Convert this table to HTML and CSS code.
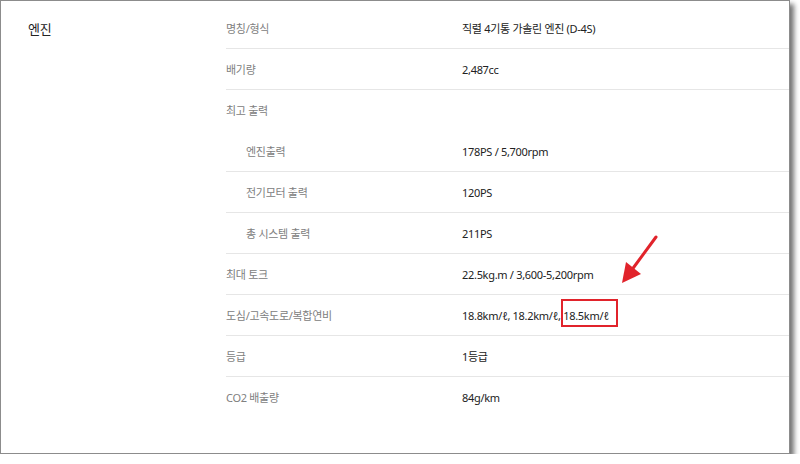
FILE: index.html
```html
<!DOCTYPE html>
<html lang="ko">
<head>
<meta charset="utf-8">
<link rel="stylesheet" href="styles.css">
</head>
<body>
<div class="frame">
  <div class="spec">
    <div class="cat">엔진</div>
    <div class="rows">
      <div class="row"><div class="label">명칭/형식</div><div class="value">직렬 4기통 가솔린 엔진 (D-4S)</div></div>
      <div class="row"><div class="label">배기량</div><div class="value">2,487cc</div></div>
      <div class="row no-line"><div class="label">최고 출력</div><div class="value"></div></div>
      <div class="row"><div class="label sub">엔진출력</div><div class="value">178PS / 5,700rpm</div></div>
      <div class="row"><div class="label sub">전기모터 출력</div><div class="value">120PS</div></div>
      <div class="row"><div class="label sub">총 시스템 출력</div><div class="value">211PS</div></div>
      <div class="row"><div class="label">최대 토크</div><div class="value">22.5kg.m / 3,600-5,200rpm</div></div>
      <div class="row"><div class="label">도심/고속도로/복합연비</div><div class="value">18.8km/ℓ, 18.2km/ℓ, 18.5km/ℓ</div></div>
      <div class="row"><div class="label">등급</div><div class="value">1등급</div></div>
      <div class="row no-line"><div class="label">CO2 배출량</div><div class="value">84g/km</div></div>
    </div>
  </div>
  <div class="highlight"></div>
  <svg class="arrow" width="60" height="70" viewBox="0 0 60 70">
    <line x1="55" y1="17" x2="30" y2="51" stroke="#e1232b" stroke-width="3" stroke-linecap="round"/>
    <polygon points="21,63 25,42 40,54" fill="#e1232b"/>
  </svg>
</div>
</body>
</html>
```
FILE: styles.css
```css
html, body {
  margin: 0;
  padding: 0;
  background: #ffffff;
}

body {
  font-family: "Noto Sans", "Noto Sans CJK KR", sans-serif;
}

.frame {
  position: relative;
  width: 790px;
  height: 454px;
  box-sizing: border-box;
  border: 1px solid #8c8c8c;
  background: #ffffff;
  box-shadow: 4px 4px 5px rgba(0, 0, 0, 0.55);
}

.spec {
  display: flex;
  padding-top: 7px;
}

.cat {
  width: 198px;
  padding-left: 27px;
  box-sizing: border-box;
  height: 41px;
  display: flex;
  align-items: center;
  font-size: 13px;
  color: #222222;
  letter-spacing: -0.3px;
}

.rows {
  flex: 1;
  padding-left: 27px;
}

.row {
  display: flex;
  align-items: center;
  height: 40px;
  border-bottom: 1px solid #e6e6e6;
  font-size: 11px;
  letter-spacing: -0.3px;
}

.row.no-line {
  border-bottom-color: transparent;
}

.label {
  width: 236px;
  flex: none;
  color: #808080;
}

.label.sub {
  padding-left: 20px;
  box-sizing: border-box;
}

.value {
  color: #222222;
}

.highlight {
  position: absolute;
  left: 560px;
  top: 298px;
  width: 57px;
  height: 28px;
  box-sizing: border-box;
  border: 2px solid #e1232b;
}

.arrow {
  position: absolute;
  left: 600px;
  top: 219px;
}
```
